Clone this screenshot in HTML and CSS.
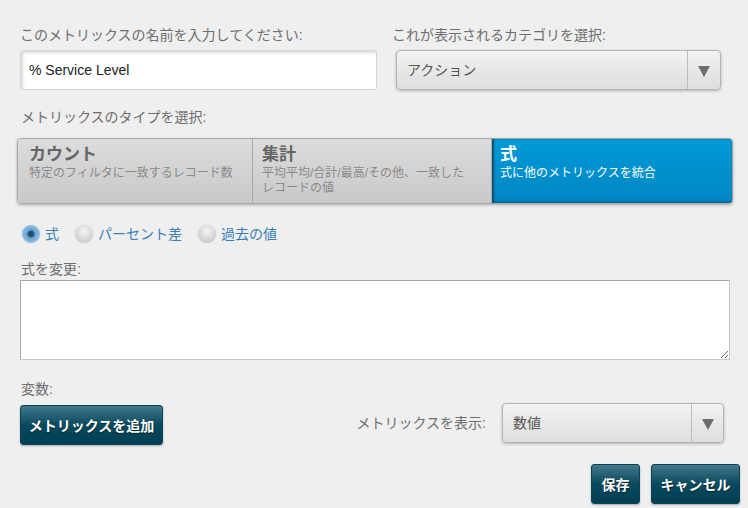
FILE: index.html
```html
<!DOCTYPE html>
<html>
<head>
  <title>メトリックスの編集</title>
  <link rel="stylesheet" href="styles.css">
</head>
<body>
  <div class="editor">
    <div class="top-row">
      <div class="field">
        <label for="metricName">このメトリックスの名前を入力してください:</label>
        <input type="text" id="metricName" class="text-input" value="% Service Level">
      </div>
      <div class="field field-category">
        <label>これが表示されるカテゴリを選択:</label>
        <div class="select">
          <span class="select-value">アクション</span>
          <span class="select-arrow"></span>
        </div>
      </div>
    </div>

    <label class="section-label">メトリックスのタイプを選択:</label>
    <div class="type-tabs">
      <div class="type-tab">
        <div class="tab-title">カウント</div>
        <div class="tab-desc">特定のフィルタに一致するレコード数</div>
      </div>
      <div class="type-tab">
        <div class="tab-title">集計</div>
        <div class="tab-desc">平均平均/合計/最高/その他、一致した<br>レコードの値</div>
      </div>
      <div class="type-tab active">
        <div class="tab-title">式</div>
        <div class="tab-desc">式に他のメトリックスを統合</div>
      </div>
    </div>

    <div class="radio-row">
      <span class="radio checked"><span class="dot"></span>式</span>
      <span class="radio"><span class="dot"></span>パーセント差</span>
      <span class="radio"><span class="dot"></span>過去の値</span>
    </div>

    <label class="section-label formula-label">式を変更:</label>
    <textarea class="formula"></textarea>

    <label class="section-label vars-label">変数:</label>
    <div class="vars-row">
      <button class="btn btn-add">メトリックスを追加</button>
      <div class="display-as">
        <span class="display-label">メトリックスを表示:</span>
        <div class="select select-small">
          <span class="select-value">数値</span>
          <span class="select-arrow"></span>
        </div>
      </div>
    </div>

    <div class="actions">
      <button class="btn">保存</button>
      <button class="btn">キャンセル</button>
    </div>
  </div>
</body>
</html>
```

FILE: styles.css
```css
* {
  margin: 0;
  padding: 0;
  box-sizing: border-box;
}

body {
  font-family: 'Liberation Sans', 'Noto Sans CJK JP', sans-serif;
  background: #efefef;
  color: #666;
  font-size: 14px;
  line-height: 20px;
}

.editor {
  width: 748px;
  height: 508px;
  padding: 25px 0 0 20px;
  overflow: hidden;
}

label {
  display: block;
  color: #6e6e6e;
  font-size: 14px;
  line-height: 20px;
}

.top-row {
  display: flex;
}

.field {
  width: 357px;
}

.field label {
  margin-bottom: 5px;
}

.field-category {
  width: 325px;
  margin-left: 15px;
}

.field-category .select {
  margin-left: 4px;
}

.text-input {
  width: 357px;
  height: 40px;
  border: 1px solid #d6d6d6;
  border-radius: 3px;
  background: #fff;
  box-shadow: inset 2px 2px 3px rgba(0, 0, 0, 0.15);
  padding: 0 8px;
  font-family: 'Liberation Sans', sans-serif;
  font-size: 14px;
  color: #222;
  outline: none;
}

.select {
  display: flex;
  width: 325px;
  height: 40px;
  border: 1px solid #b4b4b4;
  border-radius: 4px;
  background: linear-gradient(#f2f2f2, #dedede);
  box-shadow: 0 1px 3px rgba(0, 0, 0, 0.25);
}

.select-value {
  flex: 1;
  padding-left: 10px;
  line-height: 38px;
  color: #555;
  border-right: 1px solid #bdbdbd;
}

.select-arrow {
  width: 32px;
  display: flex;
  align-items: center;
  justify-content: center;
}

.select-arrow::after {
  content: '';
  border-left: 6px solid transparent;
  border-right: 6px solid transparent;
  border-top: 11px solid #6e6e6e;
  margin-top: 2px;
}

.section-label {
  margin-top: 17px;
  margin-left: 1px;
}

.type-tabs {
  display: flex;
  width: 716px;
  height: 66px;
  margin: 11px 0 0 -3px;
  border: 1px solid #a8a8a8;
  border-radius: 4px;
  box-shadow: 0 1px 3px rgba(0, 0, 0, 0.3);
  overflow: hidden;
}

.type-tab {
  width: 235px;
  padding: 6px 0 0 11px;
  background: linear-gradient(#dcdcdc, #c9c9c9);
  border-right: 1px solid #a8a8a8;
}

.type-tab:nth-child(2) {
  width: 239px;
  padding-left: 9px;
}

.type-tab.active {
  flex: 1;
  border-right: none;
  padding-left: 8px;
  background: linear-gradient(#009ad9, #0086c2);
  box-shadow: inset 2px 0 2px #10506e, inset 0 -2px 2px rgba(0, 60, 100, 0.3);
}

.tab-title {
  font-size: 17px;
  font-weight: bold;
  line-height: 20px;
  color: #666;
}

.tab-desc {
  font-size: 12px;
  line-height: 15px;
  color: #8a8a8a;
  margin-top: 1px;
}

.type-tab.active .tab-title,
.type-tab.active .tab-desc {
  color: #fff;
}

.radio-row {
  display: flex;
  gap: 7px;
  margin-top: 20px;
  height: 20px;
  align-items: center;
}

.radio {
  display: flex;
  align-items: center;
  color: #3a7fb8;
  font-size: 14px;
  margin-right: 7px;
}

.radio .dot {
  width: 18px;
  height: 18px;
  border-radius: 50%;
  margin: 0 5px 0 2px;
  background: radial-gradient(circle at 50% 35%, #f4f4f4, #cfcfcf 70%, #b9b9b9);
  box-shadow: 0 0 1px rgba(0, 0, 0, 0.3);
}

.radio.checked .dot {
  background: radial-gradient(circle, #1d4a6a 0, #2a5878 3px, #6aa3cf 4px, #8fc0e6 9px);
}

.formula-label {
  margin-top: 15px;
}

.formula {
  display: block;
  width: 710px;
  height: 80px;
  margin-top: 1px;
  border: 1px solid #c8c8c8;
  border-top-color: #a8a8a8;
  border-left-color: #a8a8a8;
  background: #fff;
  resize: both;
  outline: none;
}

.vars-label {
  margin-top: 19px;
}

.vars-row {
  display: flex;
  align-items: center;
  justify-content: space-between;
  width: 704px;
  margin-top: 6px;
}

.btn {
  height: 40px;
  padding: 0 10px;
  border: 1px solid #0c4256;
  border-radius: 3px;
  background: linear-gradient(#41778b, #0a4a5e 50%, #003f53);
  color: #fff;
  font-family: 'Noto Sans CJK JP', sans-serif;
  font-size: 14px;
  font-weight: bold;
  text-shadow: 0 1px 1px rgba(0, 0, 0, 0.6);
  box-shadow: 0 1px 2px rgba(0, 0, 0, 0.3);
}

.btn-add {
  width: 143px;
  padding: 0;
}

.display-as {
  display: flex;
  align-items: center;
  margin-top: -4px;
}

.display-label {
  color: #6e6e6e;
  margin-right: 16px;
}

.select-small {
  width: 222px;
}

.select-small .select-arrow {
  width: 31px;
}

.actions {
  display: flex;
  justify-content: flex-end;
  gap: 11px;
  width: 720px;
  margin-top: 19px;
}

.actions .btn:first-child {
  width: 49px;
  padding: 0;
}

.actions .btn:last-child {
  width: 89px;
  padding: 0;
}
```
